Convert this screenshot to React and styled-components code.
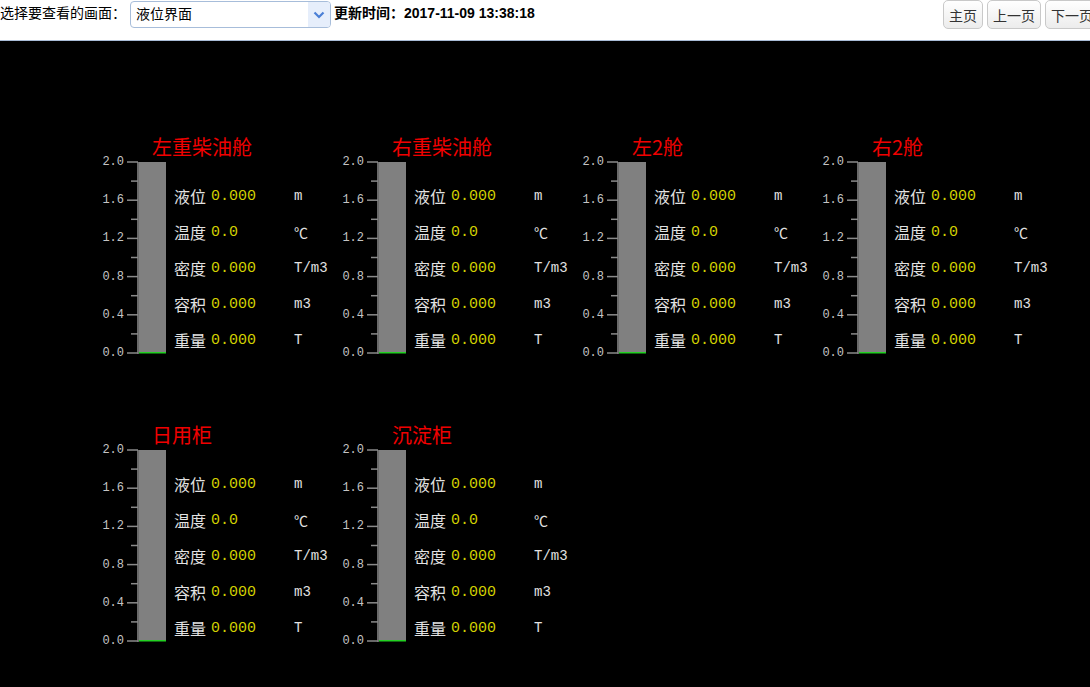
import { createGlobalStyle, styled } from 'styled-components';

const GlobalStyle = createGlobalStyle`
  html, body {
    margin: 0;
    padding: 0;
    background: #000;
    overflow: hidden;
  }
  #root {
    min-height: 100vh;
    background: #000;
  }
`;

const Page = styled.div`
  width: 1100px;
  min-height: 687px;
  background: #000;
`;

const Header = styled.header`
  display: flex;
  align-items: flex-start;
  height: 40px;
  background: #fff;
  border-bottom: 1px solid #a9bcd6;
  font-family: 'Liberation Sans', 'Noto Sans CJK SC', sans-serif;
  font-size: 14px;
  color: #000;
`;

const Label = styled.span`
  line-height: 27px;
  white-space: nowrap;
`;

const SelectBox = styled.div`
  display: flex;
  align-items: stretch;
  width: 199px;
  height: 25px;
  margin: 1px 3px 0 4px;
  border: 1px solid #a7bdda;
  border-radius: 4px;
  background: #fff;
  overflow: hidden;
`;

const SelectText = styled.span`
  flex: 1;
  padding-left: 5px;
  line-height: 25px;
`;

const SelectArrow = styled.span`
  display: flex;
  align-items: center;
  justify-content: center;
  width: 22px;
  background: #e6eefb;
`;

const UpdateTime = styled.span`
  font-weight: bold;
  line-height: 27px;
  white-space: nowrap;
`;

const Spacer = styled.div`
  flex: 1;
`;

const NavGroup = styled.div`
  display: flex;
  gap: 4px;
  margin-right: 1px;
`;

const NavButton = styled.button`
  height: 29px;
  padding: 0 5px;
  font-family: 'Liberation Sans', 'Noto Sans CJK SC', sans-serif;
  font-size: 14px;
  color: #333;
  background: linear-gradient(#ffffff, #ececec);
  border: 1px solid #c9c9c9;
  border-radius: 5px;
  cursor: pointer;
`;

const Board = styled.main`
  display: grid;
  grid-template-columns: repeat(4, 240px);
  row-gap: 66px;
  padding: 95px 0 0 100px;
`;

const Panel = styled.section`
  display: flex;
  flex-direction: column;
`;

const Title = styled.h3`
  margin: 0 0 2px 52px;
  height: 22px;
  line-height: 22px;
  font-family: 'Noto Sans CJK SC', sans-serif;
  font-size: 20px;
  font-weight: normal;
  color: #f00000;
  white-space: nowrap;
`;

const GaugeRow = styled.div`
  display: flex;
  align-items: flex-start;
`;

const Gauge = styled.svg`
  display: block;
  overflow: visible;
  flex: none;
`;

const Readings = styled.div`
  display: flex;
  flex-direction: column;
  margin-left: 7px;
  padding-top: 18px;
`;

const Reading = styled.div`
  display: flex;
  align-items: center;
  height: 36px;
  white-space: nowrap;
`;

const Name = styled.span`
  width: 37px;
  font-family: 'Noto Sans CJK SC', sans-serif;
  font-size: 16px;
  color: #e2e2e2;
`;

const Value = styled.span`
  width: 83px;
  font-family: 'Liberation Mono', monospace;
  font-size: 15px;
  color: #d2d200;
`;

const Unit = styled.span`
  font-family: 'Liberation Mono', 'Noto Sans CJK SC', monospace;
  font-size: 14px;
  color: #e2e2e2;
`;

const tanks = ['左重柴油舱', '右重柴油舱', '左2舱', '右2舱', '日用柜', '沉淀柜'];

const fields = [
  { name: '液位', value: '0.000', unit: 'm' },
  { name: '温度', value: '0.0', unit: '℃' },
  { name: '密度', value: '0.000', unit: 'T/m3' },
  { name: '容积', value: '0.000', unit: 'm3' },
  { name: '重量', value: '0.000', unit: 'T' },
];

const scale = ['2.0', '1.6', '1.2', '0.8', '0.4', '0.0'];

const BAR_TOP = 2;
const BAR_H = 191;
const STEP = BAR_H / 5;

const TankGauge = ({ level = 0 }) => {
  const fillH = (BAR_H * level) / 2;
  return (
    <Gauge width="67" height="196" viewBox="0 0 67 196">
      <rect x="38" y={BAR_TOP} width="28" height={BAR_H} fill="#808080" />
      <line x1="38" y1={BAR_TOP} x2="38" y2={BAR_TOP + BAR_H + 1} stroke="#6a6a6a" strokeWidth="2" />
      {scale.map((s, i) => {
        const y = BAR_TOP + i * STEP;
        return (
          <g key={s}>
            <line x1="27" y1={y} x2="38" y2={y} stroke="#8a8a8a" strokeWidth="1.5" />
            <text
              x="24"
              y={y}
              textAnchor="end"
              dominantBaseline="central"
              fontFamily="'Liberation Mono', monospace"
              fontSize="12"
              fill="#c4c4c4"
            >
              {s}
            </text>
          </g>
        );
      })}
      {[0, 1, 2, 3, 4].map(i => {
        const y = BAR_TOP + i * STEP + STEP / 2;
        return <line key={i} x1="31" y1={y} x2="38" y2={y} stroke="#8a8a8a" strokeWidth="1.5" />;
      })}
      <rect x="39" y={BAR_TOP + BAR_H - fillH - 1} width="27" height={fillH + 1.5} fill="#22d022" />
    </Gauge>
  );
};

const Tank = ({ name }) => (
  <Panel>
    <Title>{name}</Title>
    <GaugeRow>
      <TankGauge level={0} />
      <Readings>
        {fields.map(f => (
          <Reading key={f.name}>
            <Name>{f.name}</Name>
            <Value>{f.value}</Value>
            <Unit>{f.unit}</Unit>
          </Reading>
        ))}
      </Readings>
    </GaugeRow>
  </Panel>
);

const App = () => (
  <Page>
    <GlobalStyle />
    <Header>
      <Label>选择要查看的画面：</Label>
      <SelectBox>
        <SelectText>液位界面</SelectText>
        <SelectArrow>
          <svg width="12" height="8" viewBox="0 0 12 8">
            <path d="M1.5 1.5 L6 6 L10.5 1.5" fill="none" stroke="#4a7fd6" strokeWidth="2.2" />
          </svg>
        </SelectArrow>
      </SelectBox>
      <UpdateTime>更新时间：2017-11-09 13:38:18</UpdateTime>
      <Spacer />
      <NavGroup>
        <NavButton>主页</NavButton>
        <NavButton>上一页</NavButton>
        <NavButton>下一页</NavButton>
      </NavGroup>
    </Header>
    <Board>
      {tanks.map(t => (
        <Tank key={t} name={t} />
      ))}
    </Board>
  </Page>
);

export default App;
